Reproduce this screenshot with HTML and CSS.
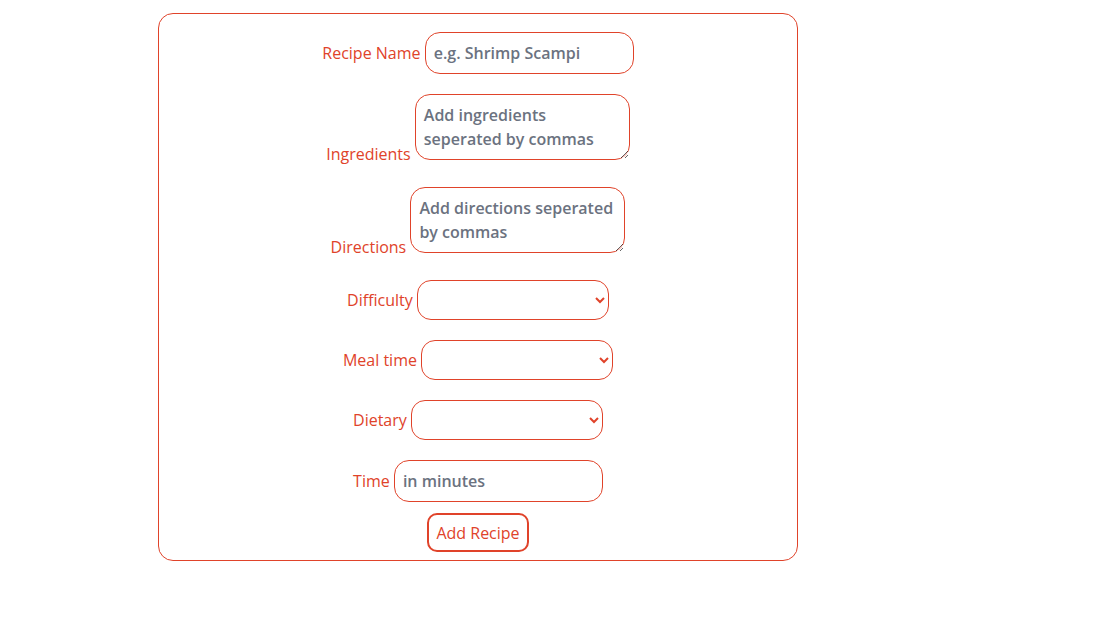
FILE: index.html
```html
<!DOCTYPE html>
<html lang="en">
<head>
<meta charset="utf-8">
<title>Add Recipe</title>
<link rel="stylesheet" href="styles.css">
</head>
<body>
<form class="recipe-form">
  <div class="row">
    <label class="label" for="name">Recipe Name</label>
    <input class="field field-text" id="name" type="text" placeholder="e.g. Shrimp Scampi">
  </div>
  <div class="row row-area">
    <label class="label" for="ingredients">Ingredients</label>
    <textarea class="field field-area" id="ingredients" rows="2" placeholder="Add ingredients seperated by commas"></textarea>
  </div>
  <div class="row row-area">
    <label class="label" for="directions">Directions</label>
    <textarea class="field field-area" id="directions" rows="2" placeholder="Add directions seperated by commas"></textarea>
  </div>
  <div class="row">
    <label class="label" for="difficulty">Difficulty</label>
    <select class="field field-select" id="difficulty"><option></option></select>
  </div>
  <div class="row">
    <label class="label" for="meal">Meal time</label>
    <select class="field field-select" id="meal"><option></option></select>
  </div>
  <div class="row">
    <label class="label" for="dietary">Dietary</label>
    <select class="field field-select" id="dietary"><option></option></select>
  </div>
  <div class="row row-last">
    <label class="label" for="time">Time</label>
    <input class="field field-text" id="time" type="text" placeholder="in minutes">
  </div>
  <div class="row-button">
    <button class="submit" type="button">Add Recipe</button>
  </div>
</form>
</body>
</html>
```
FILE: styles.css
```css
html, body {
  background: #ffffff;
}
body {
  margin: 8px;
  font-family: "Open Sans", "Liberation Sans", sans-serif;
  font-size: 16px;
  line-height: 24px;
  color: #e0432a;
}
.recipe-form {
  width: 640px;
  box-sizing: border-box;
  margin: 5px 0 0 150px;
  padding: 18px 0 0 0;
  border: 1px solid #e0432a;
  border-radius: 15px;
  text-align: center;
}
.row {
  margin-bottom: 20px;
}
.row-area {
  margin-bottom: 21px;
}
.row-last {
  margin-bottom: 11px;
}
.label {
  color: #e0432a;
  font-weight: 400;
}
.field {
  font-family: inherit;
  font-size: 16px;
  line-height: 24px;
  box-sizing: border-box;
  border: 1px solid #e0432a;
  border-radius: 15px;
  background: #fff;
  color: #6b7280;
  font-weight: 600;
  outline: none;
  margin: 0;
}
.field::placeholder {
  color: #6b7280;
  opacity: 1;
}
.field-text {
  width: 209px;
  height: 42px;
  padding: 8px;
}
.field-area {
  width: 215px;
  height: 66px;
  padding: 8px;
  vertical-align: baseline;
}
.field-select {
  width: 192px;
  height: 40px;
  padding: 0 6px;
  color: #e0432a;
  border-radius: 14px;
}
.row-button {
  padding-bottom: 8px;
}
.submit {
  font-family: inherit;
  font-size: 16px;
  line-height: 24px;
  font-weight: 400;
  color: #e0432a;
  background: #fff;
  border: 2px solid #e0432a;
  border-radius: 10px;
  padding: 5px 0;
  width: 102px;
  height: 39px;
  white-space: nowrap;
  cursor: pointer;
}
```
